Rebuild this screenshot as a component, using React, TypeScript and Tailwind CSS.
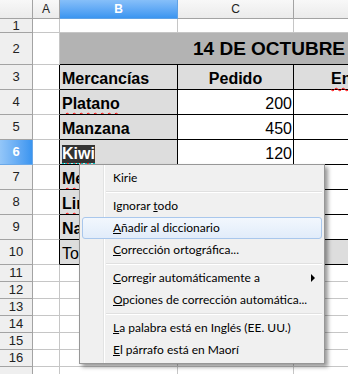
import type { ReactNode } from 'react'

const GRID = 'border-[#c6c6c6]'

interface TableRow {
  n: number
  b: string
  c?: string
  d?: string
  head?: boolean
  wavy?: boolean
  kiwi?: boolean
  total?: boolean
}

const tableRows: TableRow[] = [
  { n: 3, b: 'Mercancías', c: 'Pedido', d: 'Entregado', head: true },
  { n: 4, b: 'Platano', c: '200', wavy: true },
  { n: 5, b: 'Manzana', c: '450' },
  { n: 6, b: 'Kiwi', c: '120', kiwi: true },
  { n: 7, b: 'Melón', wavy: true },
  { n: 8, b: 'Limón', wavy: true },
  { n: 9, b: 'Naranja' },
  { n: 10, b: 'Total', total: true },
]

function RowHead({ n, active }: { n?: number; active?: boolean }) {
  return (
    <div
      className={
        'w-[33px] shrink-0 flex items-center justify-center border-r border-b text-[13px] ' +
        (active
          ? 'bg-linear-to-r from-[#93c6f8] to-[#3a95f0] border-[#6aa8e8] text-white font-bold'
          : 'bg-[#efefef] border-[#a3a3a3] text-[#222]')
      }
    >
      {n}
    </div>
  )
}

function Row({ h, children }: { h: string; children: ReactNode }) {
  return <div className={'flex ' + h}>{children}</div>
}

function MenuItem({ children, hover, arrow }: { children: ReactNode; hover?: boolean; arrow?: boolean }) {
  if (hover) {
    return (
      <div className="relative h-[22px] mx-[2px] flex items-center rounded-[3px] border border-[#a9c7ec] bg-linear-to-b from-[#f2f7fd] to-[#e1ecfa] pl-[30px]">
        {children}
      </div>
    )
  }
  return (
    <div className="relative h-[22px] flex items-center pl-[33px]">
      {children}
      {arrow && (
        <span className="ml-auto mr-[9px] w-0 h-0 border-l-[4px] border-l-black border-y-[4px] border-y-transparent" />
      )}
    </div>
  )
}

function Sep() {
  return (
    <div className="relative h-[6px] flex flex-col justify-center ml-[26px] mr-[2px]">
      <div className="h-px bg-[#e0e0e0]" />
      <div className="h-px bg-white" />
    </div>
  )
}

export default function App() {
  return (
    <div className="relative w-[348px] h-[374px] overflow-hidden bg-white font-['Liberation_Sans',Arial,sans-serif] text-black">
      {/* Column headers */}
      <Row h="h-[19px]">
        <div className="w-[33px] shrink-0 border-r border-b border-[#a3a3a3] bg-linear-to-b from-[#f8f8f8] to-[#ebebeb]" />
        <div className="w-[27px] shrink-0 border-r border-b border-[#a3a3a3] bg-linear-to-b from-[#f8f8f8] to-[#ebebeb] flex items-center justify-center text-[12px] text-[#222]">
          A
        </div>
        <div className="w-[118px] shrink-0 border-r border-b border-[#5fa2e6] bg-linear-to-b from-[#86bff9] to-[#3a95f0] flex items-center justify-center text-[12px] font-bold text-white">
          B
        </div>
        <div className="w-[116px] shrink-0 border-r border-b border-[#a3a3a3] bg-linear-to-b from-[#f8f8f8] to-[#ebebeb] flex items-center justify-center text-[12px] text-[#222]">
          C
        </div>
        <div className="w-[116px] shrink-0 border-r border-b border-[#a3a3a3] bg-linear-to-b from-[#f8f8f8] to-[#ebebeb]" />
      </Row>

      {/* Row 1 */}
      <Row h="h-[14px]">
        <RowHead n={1} />
        <div className={'w-[27px] shrink-0 border-r border-b ' + GRID} />
        <div className={'w-[118px] shrink-0 border-r border-b ' + GRID} />
        <div className={'w-[116px] shrink-0 border-r border-b ' + GRID} />
        <div className={'w-[116px] shrink-0 border-r border-b ' + GRID} />
      </Row>

      {/* Row 2 - merged title */}
      <Row h="h-[32px]">
        <RowHead n={2} />
        <div className={'w-[27px] shrink-0 border-r border-b ' + GRID} />
        <div className="w-[350px] shrink-0 bg-[#b3b3b3] border-b border-black flex items-end pb-[4px] pl-[133px] text-[19px] leading-[22px] font-bold whitespace-nowrap">
          14 DE OCTUBRE
        </div>
      </Row>

      {/* Table rows */}
      {tableRows.map((r) => {
        const grey = r.head || r.total
        return (
          <Row key={r.n} h="h-[25px]">
            <RowHead n={r.n} active={r.kiwi} />
            <div className={'w-[27px] shrink-0 border-r border-r-black border-b ' + GRID} />
            <div className="w-[118px] shrink-0 bg-[#dddddd] border-r border-b border-black flex items-end pb-[1px] pl-[2px] text-[16px] leading-[18px] whitespace-nowrap overflow-hidden">
              {r.kiwi ? (
                <span className="relative bg-[#333333] text-white font-bold underline decoration-wavy decoration-[#ff0000] decoration-1 underline-offset-[3px]">
                  {r.b}
                  <span className="absolute left-0 right-0 bottom-[-2px] border-b-2 border-dotted border-[#00c8c8]" />
                </span>
              ) : (
                <span
                  className={
                    (r.total ? 'font-normal ' : 'font-bold ') +
                    (r.wavy ? 'underline decoration-wavy decoration-[#ff0000] decoration-1 underline-offset-[3px]' : '')
                  }
                >
                  {r.b}
                </span>
              )}
            </div>
            <div
              className={
                'w-[116px] shrink-0 border-r border-b border-black flex items-end pb-[1px] text-[16px] leading-[18px] ' +
                (grey ? 'bg-[#dddddd] ' : '') +
                (r.head ? 'justify-center font-bold' : 'justify-end pr-[1px]')
              }
            >
              {r.c}
            </div>
            <div
              className={
                'w-[116px] shrink-0 border-r border-b border-black flex items-end pb-[1px] pl-[37px] text-[16px] leading-[18px] whitespace-nowrap ' +
                (grey ? 'bg-[#dddddd] ' : '') +
                (r.head ? 'font-bold' : '')
              }
            >
              {r.d && (
                <span className="underline decoration-wavy decoration-[#ff0000] decoration-1 underline-offset-[3px]">{r.d}</span>
              )}
            </div>
          </Row>
        )
      })}

      {/* Empty rows */}
      {[11, 12, 13, 14, 15, 16, 0].map((n) => (
        <Row key={n} h="h-[17px]">
          <RowHead n={n || undefined} />
          <div className={'w-[27px] shrink-0 border-r border-b ' + GRID} />
          <div className={'w-[118px] shrink-0 border-r border-b ' + GRID} />
          <div className={'w-[116px] shrink-0 border-r border-b ' + GRID} />
          <div className={'w-[116px] shrink-0 border-r border-b ' + GRID} />
        </Row>
      ))}

      {/* Context menu */}
      <div className="absolute left-[79px] top-[164px] w-[246px] bg-[#f0f0f0] border border-[#979797] py-[2px] shadow-[3px_3px_4px_rgba(0,0,0,0.4)] font-['Lato','Open_Sans',sans-serif] text-[12px] text-black">
        <div className="absolute left-[23px] top-0 bottom-0 w-px bg-[#e2e3e3]" />
        <div className="absolute left-[24px] top-0 bottom-0 w-px bg-white" />
        <MenuItem>Kirie</MenuItem>
        <Sep />
        <MenuItem>
          <span>
            Ignorar <span className="underline">t</span>odo
          </span>
        </MenuItem>
        <MenuItem hover>
          <span>
            <span className="underline">A</span>ñadir al diccionario
          </span>
        </MenuItem>
        <MenuItem>
          <span>
            <span className="underline">C</span>orrección ortográfica...
          </span>
        </MenuItem>
        <Sep />
        <MenuItem arrow>
          <span>
            <span className="underline">C</span>orregir automáticamente a
          </span>
        </MenuItem>
        <MenuItem>
          <span>
            <span className="underline">O</span>pciones de corrección automática...
          </span>
        </MenuItem>
        <Sep />
        <MenuItem>
          <span>
            <span className="underline">L</span>a palabra está en Inglés (EE. UU.)
          </span>
        </MenuItem>
        <MenuItem>
          <span>
            <span className="underline">E</span>l párrafo está en Maorí
          </span>
        </MenuItem>
      </div>
    </div>
  )
}
